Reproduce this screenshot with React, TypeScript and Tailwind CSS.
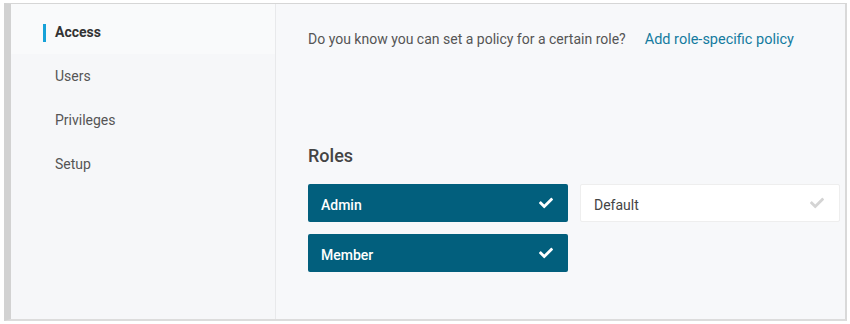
import React from "react";
import { FaCheck } from "react-icons/fa";

const font = { fontFamily: "Roboto, 'Liberation Sans', sans-serif" };

function NavItem({ label, active }: { label: string; active?: boolean }) {
  return (
    <div className={`relative flex h-[44px] items-center pl-[44px] ${active ? "bg-[#f9fafb]" : ""}`}>
      {active && <div className="absolute left-[32px] top-[14px] h-[18px] w-[3px] bg-[#17a2d8]" />}
      <span className={`text-[14px] ${active ? "font-bold text-[#333]" : "text-[#555]"}`}>{label}</span>
    </div>
  );
}

function Role({ label, selected }: { label: string; selected?: boolean }) {
  return (
    <div
      className={`flex h-[38px] w-[260px] items-center justify-between rounded-[2px] pl-[13px] pr-[15px] text-[14px] ${
        selected ? "bg-[#025f7d] font-medium text-white" : "border border-[#eeeeee] bg-white text-[#444]"
      }`}
    >
      <span className="pt-[6px]">{label}</span>
      <FaCheck className={`h-[14px] w-[14px] ${selected ? "text-white" : "text-[#d4d4d4]"}`} />
    </div>
  );
}

export default function App() {
  return (
    <div className="h-[324px] w-[850px] bg-white pl-[4px] pt-[3px]" style={font}>
      <div className="flex h-[318px] w-[843px] border-l-[7px] border-l-[#d2d2d2] border-t border-t-[#d6d6d6] border-r-[2px] border-r-[#d9d9d9] border-b-[2px] border-b-[#dcdcdc]">
        <div className="flex w-[265px] flex-col border-r border-r-[#e8e9eb] bg-[#f6f7f9] pt-[6px]">
          <div className="-mt-[6px] bg-[#f9fafb] pt-[6px]">
            <NavItem label="Access" active />
          </div>
          <NavItem label="Users" />
          <NavItem label="Privileges" />
          <NavItem label="Setup" />
        </div>
        <div className="flex-1 bg-[#f7f8fa] pl-[32px] pt-[25px]">
          <div className="flex items-center text-[14px]">
            <span className="text-[#555]">Do you know you can set a policy for a certain role?</span>
            <span className="ml-[19px] text-[14.5px] text-[#147b9f]">Add role-specific policy</span>
          </div>
          <div className="mt-[91px] text-[18px] font-medium text-[#444]">Roles</div>
          <div className="mt-[15px] grid w-[532px] grid-cols-[260px_260px] gap-x-[12px] gap-y-[12px]">
            <Role label="Admin" selected />
            <Role label="Default" />
            <Role label="Member" selected />
          </div>
        </div>
      </div>
    </div>
  );
}
